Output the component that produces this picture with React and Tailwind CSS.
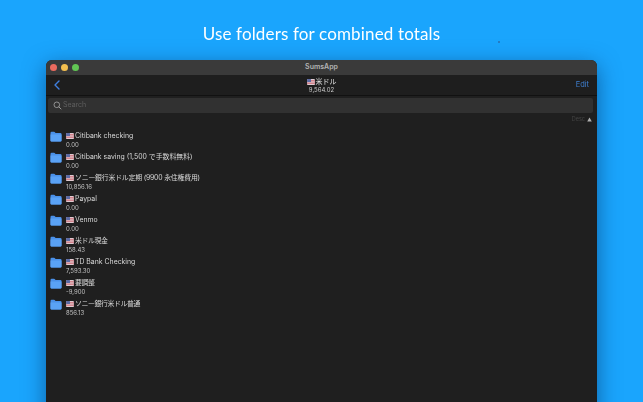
const rows = [
  ["Citibank checking", "0.00", ""],
  ["Citibank saving (1,500 で手数料無料)", "0.00", ""],
  ["ソニー銀行米ドル定期 (9900 永住権費用)", "10,856.16", "tracking-[-0.2px]"],
  ["Paypal", "0.00", ""],
  ["Venmo", "0.00", ""],
  ["米ドル現金", "158.43", "tracking-[-0.4px]"],
  ["TD Bank Checking", "7,593.30", ""],
  ["要調整", "-9,900", "tracking-[-0.4px]"],
  ["ソニー銀行米ドル普通", "856.13", "tracking-[-0.4px]"],
];

function Flag() {
  return (
    <svg width="8" height="6" viewBox="0 0 9 7" className="shrink-0">
      <rect width="9" height="7" rx="1" fill="#e6dde2" />
      <rect y="1" width="9" height="1" fill="#c9606c" />
      <rect y="3" width="9" height="1" fill="#c9606c" />
      <rect y="5" width="9" height="1" fill="#c9606c" />
      <rect width="4.5" height="3.5" rx="0.6" fill="#5a6aa4" />
    </svg>
  );
}

function Folder() {
  return (
    <svg width="12" height="11" viewBox="0 0 12 11" className="shrink-0">
      <path d="M0.5 2 Q0.5 0.8 1.7 0.8 H4 Q4.7 0.8 5.1 1.4 L5.6 2 H10.5 Q11.5 2 11.5 3 V9.6 Q11.5 10.6 10.5 10.6 H1.5 Q0.5 10.6 0.5 9.6 Z" fill="#4a90e8" />
      <path d="M0.5 3.4 H11.5 V9.6 Q11.5 10.6 10.5 10.6 H1.5 Q0.5 10.6 0.5 9.6 Z" fill="#5aa2f5" />
    </svg>
  );
}

export default function App() {
  return (
    <div className="relative h-[402px] w-[643px] overflow-hidden bg-[#1aa5fd]">
      <span className="absolute left-[498px] top-[41px] h-[2px] w-[2px] rounded-full bg-[#2a6fb0]" />
      <div className="h-[402px] font-['Lato','Liberation_Sans',sans-serif] antialiased blur-[0.3px]">
        <h1 className="pt-[22px] text-center text-[17px] leading-[24px] font-normal tracking-[0.15px] text-white">
          Use folders for combined totals
        </h1>
        <div className="mx-[46px] mt-[14px] h-[400px] w-[551px] overflow-hidden rounded-t-[6px] bg-[#1f1f1f] shadow-[0_6px_22px_rgba(0,40,90,0.55)] font-['Inter','Noto_Sans_CJK_JP',sans-serif]">
          <div className="relative flex h-[15px] items-center justify-center bg-[#3a3a3a]">
            <div className="absolute left-[4px] top-[4px] flex gap-[4px]">
              <span className="h-[7px] w-[7px] rounded-full bg-[#ec6a5e]" />
              <span className="h-[7px] w-[7px] rounded-full bg-[#f4bf4f]" />
              <span className="h-[7px] w-[7px] rounded-full bg-[#61c554]" />
            </div>
            <span className="text-[7px] font-semibold text-[#b4b4b4]">SumsApp</span>
          </div>
          <div className="grid h-[21px] grid-cols-[1fr_auto_1fr] items-center border-b border-[#111111] bg-[#1e1e1e] px-[8px]">
            <svg width="6" height="10" viewBox="0 0 6 10">
              <path d="M5 1 L1 5 L5 9" fill="none" stroke="#3f7fe0" strokeWidth="1.4" strokeLinecap="round" strokeLinejoin="round" />
            </svg>
            <div className="flex flex-col items-center">
              <div className="flex items-center gap-[1px] text-[7px] leading-[9px] text-[#e4e4e4]">
                <Flag />
                <span>米ドル</span>
              </div>
              <span className="text-[6px] leading-[7px] text-[#c8c8c8]">9,564.02</span>
            </div>
            <span className="justify-self-end text-[7.5px] text-[#3f7fd0]">Edit</span>
          </div>
          <div className="ml-[2px] mr-[4px] mt-[2px] flex h-[15px] items-center gap-[1px] rounded-[2px] bg-[#313131] px-[5px]">
            <svg width="9" height="9" viewBox="0 0 9 9">
              <circle cx="3.8" cy="3.8" r="2.8" fill="none" stroke="#9a9a9a" strokeWidth="0.9" />
              <path d="M5.9 5.9 L8 8" stroke="#9a9a9a" strokeWidth="1" strokeLinecap="round" />
            </svg>
            <span className="text-[7px] text-[#5f5f5f]">Search</span>
          </div>
          <div className="mr-[5px] mt-[2px] flex h-[9px] items-center justify-end gap-[2px]">
            <span className="text-[5.5px] text-[#444444]">Desc</span>
            <svg width="5" height="5" viewBox="0 0 5 5">
              <path d="M2.5 0.5 L4.8 4.5 H0.2 Z" fill="#b0b0b0" />
            </svg>
          </div>
          <div className="mt-[5px] flex flex-col">
            {rows.map(([name, amount, track]) => (
              <div key={name} className="flex h-[21px] pl-[4px]">
                <div className="mt-[2px]">
                  <Folder />
                </div>
                <div className="ml-[4px] flex flex-col pt-[2px]">
                  <div className="flex items-center gap-[1px] text-[6.9px] leading-[10px] text-[#d8d8d8]">
                    <Flag />
                    <span className={track}>{name}</span>
                  </div>
                  <span className="text-[6px] leading-[8px] text-[#c0c0c0]">{amount}</span>
                </div>
              </div>
            ))}
          </div>
        </div>
      </div>
    </div>
  );
}
